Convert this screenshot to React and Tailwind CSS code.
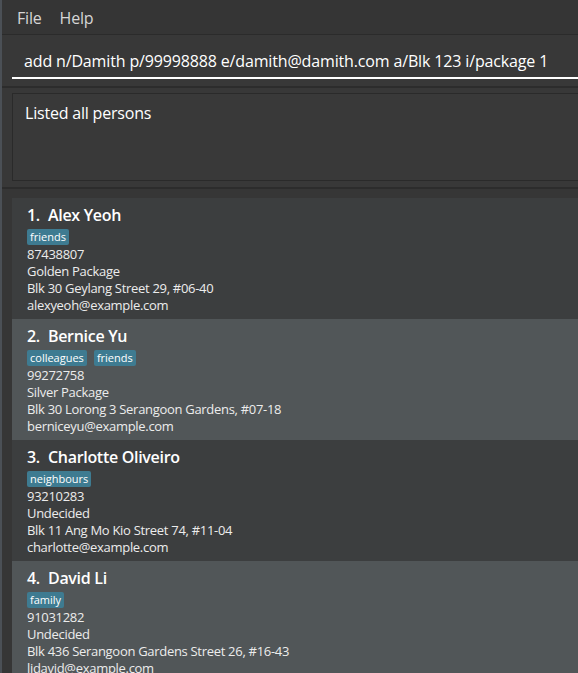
import React from "react";

const persons = [
  { n: "Alex Yeoh", tags: ["friends"], p: "87438807", pk: "Golden Package", a: "Blk 30 Geylang Street 29, #06-40", e: "alexyeoh@example.com" },
  { n: "Bernice Yu", tags: ["colleagues", "friends"], p: "99272758", pk: "Silver Package", a: "Blk 30 Lorong 3 Serangoon Gardens, #07-18", e: "berniceyu@example.com" },
  { n: "Charlotte Oliveiro", tags: ["neighbours"], p: "93210283", pk: "Undecided", a: "Blk 11 Ang Mo Kio Street 74, #11-04", e: "charlotte@example.com" },
  { n: "David Li", tags: ["family"], p: "91031282", pk: "Undecided", a: "Blk 436 Serangoon Gardens Street 26, #16-43", e: "lidavid@example.com" },
];

export default function App() {
  return (
    <div className="flex h-[673px] w-[578px] overflow-hidden bg-[#383838]" style={{ fontFamily: '"Open Sans", "Noto Sans", sans-serif' }}>
      <div className="w-[2px] shrink-0 bg-[#4b5056]" />
      <div className="flex min-w-0 flex-1 flex-col">
        <div className="flex h-[35px] shrink-0 items-center gap-[18px] border-b border-[#2b2b2b] bg-[#353535] pl-[15px] pt-[2px] text-[16px] tracking-[-0.2px] text-[#d6d6d6]">
          <span>File</span>
          <span>Help</span>
        </div>
        <div className="flex h-[51px] shrink-0 flex-col pl-[10px] pt-[9px]">
          <div className="flex h-[35px] items-center border-b-2 border-white pl-[12px] text-[16px] tracking-[-0.15px] whitespace-nowrap text-white">
            add n/Damith p/99998888 e/damith@damith.com a/Blk 123 i/package 1
          </div>
        </div>
        <div className="h-[2px] shrink-0 bg-[#2c2c2c]" />
        <div className="shrink-0 pb-[6px] pl-[10px] pt-[5px]">
          <div className="h-[88px] border border-r-0 border-[#2a2a2a] bg-[#393939] pl-[12px] pt-[7px] text-[16px] tracking-[-0.2px] text-white">
            Listed all persons
          </div>
        </div>
        <div className="h-[2px] shrink-0 bg-[#2c2c2c]" />
        <div className="flex flex-col bg-[#363636] pl-[10px] pt-[9px]">
          {persons.map((p, i) => (
            <div key={i} className={`flex h-[121px] shrink-0 flex-col pl-[15px] pt-[5px] ${i % 2 === 0 ? "bg-[#3c3e3f]" : "bg-[#515658]"}`}>
              <div className="flex h-[24px] items-center text-[16px] font-semibold tracking-[-0.3px] text-white">
                <span>{i + 1}.</span>
                <span className="ml-[8px]">{p.n}</span>
              </div>
              <div className="mt-[2px] flex h-[16px] gap-[7px]">
                {p.tags.map((t) => (
                  <span key={t} className="flex items-center rounded-[2px] bg-[#3e7b91] px-[3px] text-[11px] text-white">{t}</span>
                ))}
              </div>
              <div className="mt-[1px] flex flex-col text-[13px] leading-[17px] tracking-[-0.3px] text-[#ececec]">
                <span>{p.p}</span>
                <span>{p.pk}</span>
                <span>{p.a}</span>
                <span>{p.e}</span>
              </div>
            </div>
          ))}
        </div>
      </div>
    </div>
  );
}
